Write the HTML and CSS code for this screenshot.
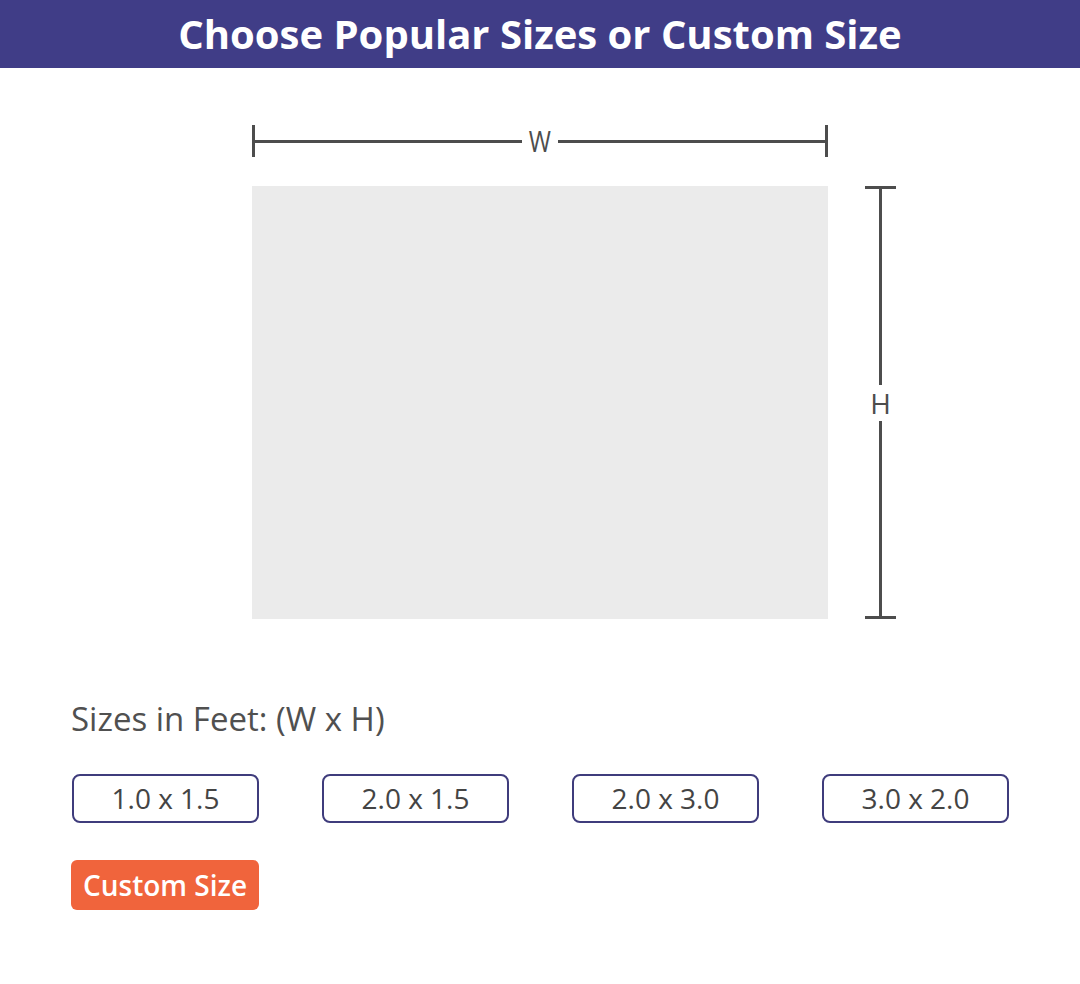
FILE: index.html
```html
<!DOCTYPE html>
<html>
	<head>
		<meta charset="utf-8">
		<title>Choose Size</title>
		<link rel="stylesheet" href="styles.css">
	</head>
	<body>
		<div class="top-bar">Choose Popular Sizes or Custom Size</div>
		<div class="main">
			<div class="figure">
				<div class="w-ruler">
					<span class="w-tick"></span>
					<span class="w-line"></span>
					<span class="w-label">W</span>
					<span class="w-line"></span>
					<span class="w-tick"></span>
				</div>
				<div class="figure-body">
					<div class="preview"></div>
					<div class="h-ruler">
						<span class="h-tick"></span>
						<span class="h-line"></span>
						<span class="h-label">H</span>
						<span class="h-line"></span>
						<span class="h-tick"></span>
					</div>
				</div>
			</div>
			<div class="sizes-title">Sizes in Feet: (W x H)</div>
			<ul class="size-list">
				<li class="size-btn">1.0 x 1.5</li>
				<li class="size-btn">2.0 x 1.5</li>
				<li class="size-btn">2.0 x 3.0</li>
				<li class="size-btn">3.0 x 2.0</li>
			</ul>
			<button class="custom-btn">Custom Size</button>
		</div>
	</body>
</html>
```

FILE: styles.css
```css
body{
	margin: 0;
	background: #fff;
	font-family: "Open Sans", "Noto Sans", sans-serif;
	color: #4a4a4a;
}
.top-bar{
	background: #403d87;
	color: #fff;
	height: 68px;
	line-height: 68px;
	text-align: center;
	font-size: 40px;
	font-weight: 700;
}
.main{
	padding: 0 71px;
}
.figure{
	padding-left: 181px;
	padding-top: 57px;
}
.w-ruler{
	display: flex;
	align-items: center;
	width: 576px;
	height: 32px;
}
.w-tick{
	width: 3px;
	height: 32px;
	background: #4d4d4d;
}
.w-line{
	flex: 1;
	height: 3px;
	background: #4d4d4d;
}
.w-label{
	padding: 0 4px;
	font-size: 30px;
	line-height: 32px;
	color: #4d4d4d;
	transform: scaleX(0.8);
}
.figure-body{
	display: flex;
	margin-top: 29px;
}
.preview{
	width: 576px;
	height: 433px;
	background: #ebebeb;
}
.h-ruler{
	display: flex;
	flex-direction: column;
	align-items: center;
	width: 31px;
	height: 433px;
	margin-left: 37px;
}
.h-tick{
	width: 31px;
	height: 3px;
	background: #4d4d4d;
}
.h-line{
	flex: 1;
	width: 3px;
	background: #4d4d4d;
}
.h-label{
	padding: 2px 0;
	font-size: 28px;
	line-height: 32px;
	color: #4d4d4d;
}
.sizes-title{
	margin-top: 80px;
	font-size: 33px;
	line-height: 40px;
	color: #505050;
}
.size-list{
	display: flex;
	gap: 63px;
	margin: 35px 0 0 1px;
	padding: 0;
	list-style: none;
}
.size-btn{
	box-sizing: border-box;
	width: 187px;
	height: 49px;
	line-height: 45px;
	border: 2px solid #3f3c7c;
	border-radius: 8px;
	text-align: center;
	font-size: 28px;
	color: #444;
}
.custom-btn{
	margin-top: 37px;
	width: 188px;
	height: 50px;
	padding: 0;
	border: none;
	border-radius: 6px;
	background: #f0643c;
	color: #fff;
	font-family: "Open Sans", "Noto Sans", sans-serif;
	font-size: 28px;
	font-weight: 600;
}
```
